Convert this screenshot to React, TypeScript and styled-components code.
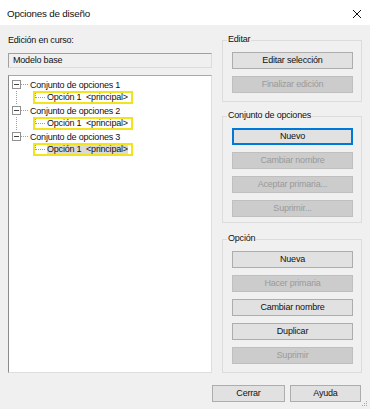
import styled, { createGlobalStyle } from 'styled-components';

const GlobalStyle = createGlobalStyle`
  html, body {
    margin: 0;
    padding: 0;
    background: #f0f0f0;
  }
  * {
    box-sizing: border-box;
  }
`;

type TreeNode = {
  label: string;
  child: string;
  selected?: boolean;
};

const optionSets: TreeNode[] = [
  { label: 'Conjunto de opciones 1', child: 'Opción 1  <principal>' },
  { label: 'Conjunto de opciones 2', child: 'Opción 1  <principal>' },
  { label: 'Conjunto de opciones 3', child: 'Opción 1  <principal>', selected: true }
];

type ButtonDef = {
  label: string;
  disabled?: boolean;
  focused?: boolean;
};

const editButtons: ButtonDef[] = [
  { label: 'Editar selección' },
  { label: 'Finalizar edición', disabled: true }
];

const setButtons: ButtonDef[] = [
  { label: 'Nuevo', focused: true },
  { label: 'Cambiar nombre', disabled: true },
  { label: 'Aceptar primaria...', disabled: true },
  { label: 'Suprimir...', disabled: true }
];

const optionButtons: ButtonDef[] = [
  { label: 'Nueva' },
  { label: 'Hacer primaria', disabled: true },
  { label: 'Cambiar nombre' },
  { label: 'Duplicar' },
  { label: 'Suprimir', disabled: true }
];

function App() {
  return (
    <>
      <GlobalStyle />
      <Dialog>
        <TitleBar>
          <Title>Opciones de diseño</Title>
          <CloseIcon width="10" height="10" viewBox="0 0 10 10">
            <path d="M1 1 L9 9 M9 1 L1 9" stroke="#111" strokeWidth="1" />
          </CloseIcon>
        </TitleBar>

        <Body>
          <Columns>
            <LeftColumn>
              <FieldLabel>Edición en curso:</FieldLabel>
              <ReadOnlyBox>Modelo base</ReadOnlyBox>
              <TreeBox>
                {optionSets.map((node, i) => {
                  const last = i === optionSets.length - 1;
                  return (
                    <div key={node.label}>
                      <TreeRow>
                        <Expander>
                          <Minus />
                        </Expander>
                        <HLine />
                        <NodeText>{node.label}</NodeText>
                      </TreeRow>
                      <TreeRow>
                        <RootGuide $show={!last} />
                        <Highlight>
                          <Connector />
                          <ChildText $selected={!!node.selected}>{node.child}</ChildText>
                        </Highlight>
                      </TreeRow>
                    </div>
                  );
                })}
              </TreeBox>
            </LeftColumn>

            <RightColumn>
              <Group $top={15} $pb={8}>
                <GroupLabel>Editar</GroupLabel>
                {editButtons.map((b) => (
                  <Button key={b.label} disabled={b.disabled} $focused={b.focused} $w={121}>
                    {b.label}
                  </Button>
                ))}
              </Group>
              <Group $top={14} $pb={5}>
                <GroupLabel>Conjunto de opciones</GroupLabel>
                {setButtons.map((b) => (
                  <Button key={b.label} disabled={b.disabled} $focused={b.focused} $w={121}>
                    {b.label}
                  </Button>
                ))}
              </Group>
              <Group $top={16} $pb={8}>
                <GroupLabel>Opción</GroupLabel>
                {optionButtons.map((b) => (
                  <Button key={b.label} disabled={b.disabled} $focused={b.focused} $w={121}>
                    {b.label}
                  </Button>
                ))}
              </Group>
            </RightColumn>
          </Columns>

          <Footer>
            <Button $w={73}>Cerrar</Button>
            <Button $w={71}>Ayuda</Button>
          </Footer>
        </Body>

        <Grip width="7" height="7" viewBox="0 0 7 7">
          <rect x="5" y="1" width="1" height="1" fill="#a8a8a8" />
          <rect x="3" y="3" width="1" height="1" fill="#a8a8a8" />
          <rect x="5" y="3" width="1" height="1" fill="#a8a8a8" />
          <rect x="1" y="5" width="1" height="1" fill="#a8a8a8" />
          <rect x="3" y="5" width="1" height="1" fill="#a8a8a8" />
          <rect x="5" y="5" width="1" height="1" fill="#a8a8a8" />
        </Grip>
      </Dialog>
    </>
  );
}

export default App;

const Dialog = styled.div`
  position: relative;
  width: 370px;
  height: 409px;
  background: #f0f0f0;
  font-family: 'Liberation Sans', Arial, sans-serif;
  font-size: 9px;
  letter-spacing: -0.2px;
  color: #111;
  overflow: hidden;
`;

const TitleBar = styled.div`
  height: 25px;
  background: #ffffff;
  display: flex;
  align-items: center;
  justify-content: space-between;
  padding: 1px 8px 0 7px;
`;

const Title = styled.span`
  font-size: 9.8px;
  color: #111;
`;

const CloseIcon = styled.svg`
  display: block;
  margin-top: 1px;
`;

const Body = styled.div`
  display: flex;
  flex-direction: column;
`;

const Columns = styled.div`
  display: flex;
  gap: 10px;
  padding: 0 8px;
`;

const LeftColumn = styled.div`
  width: 204px;
  display: flex;
  flex-direction: column;
  padding-top: 9px;
`;

const FieldLabel = styled.div`
  height: 12px;
  line-height: 12px;
`;

const ReadOnlyBox = styled.div`
  margin-top: 7px;
  height: 15px;
  line-height: 13px;
  padding-left: 4px;
  background: #f0f0f0;
  border: 1px solid #a0a0a0;
  border-right-color: #dcdcdc;
  border-bottom-color: #dcdcdc;
`;

const TreeBox = styled.div`
  margin-top: 7px;
  height: 298px;
  background: #ffffff;
  border: 1px solid #dedede;
  border-left-color: #8a8a8a;
  border-top-color: #a8a8a8;
  padding: 2px 0 0 3px;
`;

const TreeRow = styled.div`
  height: 13px;
  display: flex;
  align-items: center;
  white-space: pre;
`;

const Expander = styled.div`
  width: 9px;
  height: 9px;
  border: 1px solid #919191;
  background: #fff;
  display: flex;
  align-items: center;
  justify-content: center;
`;

const Minus = styled.div`
  width: 5px;
  height: 1px;
  background: #444;
`;

const HLine = styled.div`
  width: 7px;
  margin: 0 2px 0 0;
  border-top: 1px dotted #a0a0a0;
`;

const NodeText = styled.span`
  line-height: 12px;
`;

const RootGuide = styled.div<{ $show: boolean }>`
  width: 17px;
  align-self: stretch;
  margin-left: 4px;
  border-left: ${(p) => (p.$show ? '1px dotted #a0a0a0' : '1px solid transparent')};
`;

const Highlight = styled.div`
  display: flex;
  align-items: center;
  height: 13px;
  border: 2px solid #f2e41c;
  padding-right: 3px;
`;

const Connector = styled.div`
  width: 10px;
  height: 5px;
  margin: 0 2px 4px 0;
  border-left: 1px dotted #a0a0a0;
  border-bottom: 1px dotted #a0a0a0;
`;

const ChildText = styled.span<{ $selected: boolean }>`
  line-height: 9px;
  background: ${(p) => (p.$selected ? '#d9d9d9' : 'transparent')};
`;

const RightColumn = styled.div`
  width: 140px;
  display: flex;
  flex-direction: column;
`;

const Group = styled.div<{ $top: number; $pb: number }>`
  position: relative;
  margin-top: ${(p) => p.$top}px;
  border: 1px solid #dcdcdc;
  padding: 11px 8px ${(p) => p.$pb}px 9px;
  display: flex;
  flex-direction: column;
  gap: 7px;
`;

const GroupLabel = styled.span`
  position: absolute;
  top: -8px;
  left: 4px;
  line-height: 12px;
  padding: 0 1px;
  background: #f0f0f0;
`;

const Button = styled.button<{ $focused?: boolean; $w: number }>`
  appearance: none;
  width: ${(p) => p.$w}px;
  height: 17px;
  padding: 0;
  font: inherit;
  letter-spacing: inherit;
  color: #111;
  background: #e1e1e1;
  border: 1px solid ${(p) => (p.$focused ? '#0078d7' : '#adadad')};
  box-shadow: ${(p) => (p.$focused ? 'inset 0 0 0 1px #0078d7' : 'none')};
  line-height: 15px;
  text-align: center;
  cursor: default;

  &:disabled {
    background: #cccccc;
    border-color: #bfbfbf;
    color: #9a9a9a;
  }
`;

const Footer = styled.div`
  display: flex;
  justify-content: flex-end;
  gap: 5px;
  padding: 12px 9px 0 0;
`;

const Grip = styled.svg`
  position: absolute;
  right: 2px;
  bottom: 2px;
`;
